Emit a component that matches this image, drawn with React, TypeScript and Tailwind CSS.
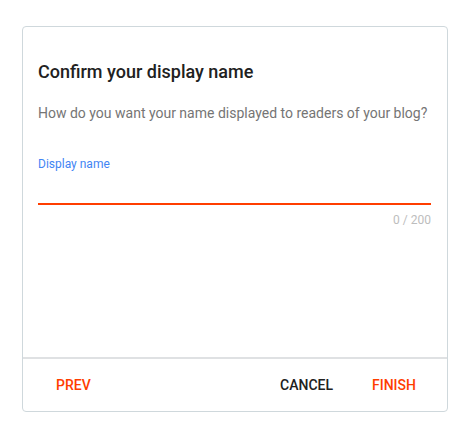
export default function App() {
  return (
    <div className="min-h-screen bg-white pl-[22px] pt-[26px]" style={{ fontFamily: 'Roboto, "Liberation Sans", sans-serif' }}>
      <div className="flex h-[386px] w-[426px] flex-col rounded-[4px] border border-[#cfd8dc] bg-white">
        <div className="flex-1 pl-[15px] pr-[16px] pt-[33px]">
          <h2 className="text-[18px] font-medium leading-[24px] text-[#212121]">Confirm your display name</h2>
          <p className="mt-[19px] text-[14px] leading-[20px] text-[#757575]">
            How do you want your name displayed to readers of your blog?
          </p>
          <label className="mt-[33px] block text-[12px] leading-[16px] text-[#4285f4]">Display name</label>
          <input className="block h-[33px] w-full border-b-2 border-[#ff3d00] bg-transparent text-[16px] text-[#212121] outline-none" />
          <div className="mt-[7px] text-right text-[12px] leading-[16px] text-[#bdbdbd]">0 / 200</div>
        </div>
        <div className="flex h-[54px] items-center border-t-2 border-[#dfe1e3] pl-[17px] pr-[15px]">
          <button className="px-[16px] text-[14px] font-medium leading-[20px] text-[#ff3d00]">PREV</button>
          <div className="flex-1" />
          <button className="px-[16px] text-[14px] font-medium leading-[20px] text-[#212121]">CANCEL</button>
          <button className="ml-[7px] px-[16px] text-[14px] font-medium leading-[20px] text-[#ff3d00]">FINISH</button>
        </div>
      </div>
    </div>
  )
}
